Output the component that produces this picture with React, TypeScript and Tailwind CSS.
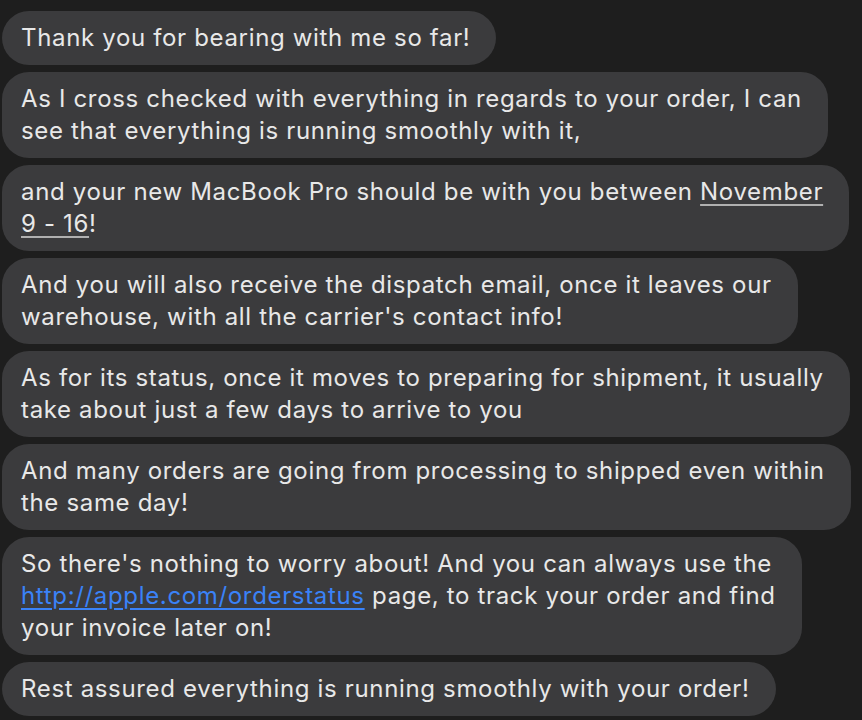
import React from "react";

const Bubble = ({ children }: { children: React.ReactNode }) => (
  <div className="w-fit rounded-[27px] bg-[#3b3b3d] pl-[19px] pr-[26px] py-[11px] text-[24px] leading-[32px] tracking-[0.66px] text-[#e8e8e8] whitespace-nowrap">
    {children}
  </div>
);

export default function App() {
  return (
    <div
      className="min-h-[720px] w-[862px] overflow-hidden bg-[#1e1e1e] pl-[2px] pt-[11px] flex flex-col items-start gap-[7px]"
      style={{ fontFamily: "Inter, 'Noto Sans', sans-serif" }}
    >
      <Bubble>Thank you for bearing with me so far!</Bubble>
      <Bubble>
        As I cross checked with everything in regards to your order, I can
        <br />
        see that everything is running smoothly with it,
      </Bubble>
      <Bubble>
        and your new MacBook Pro should be with you between{" "}
        <span className="underline underline-offset-[4px] decoration-[#b0b0b0]">November</span>
        <br />
        <span className="underline underline-offset-[4px] decoration-[#b0b0b0]">9 - 16</span>!
      </Bubble>
      <Bubble>
        And you will also receive the dispatch email, once it leaves our
        <br />
        warehouse, with all the carrier's contact info!
      </Bubble>
      <Bubble>
        As for its status, once it moves to preparing for shipment, it usually
        <br />
        take about just a few days to arrive to you
      </Bubble>
      <Bubble>
        And many orders are going from processing to shipped even within
        <br />
        the same day!
      </Bubble>
      <Bubble>
        So there's nothing to worry about! And you can always use the
        <br />
        <span className="text-[#3a82f7] underline underline-offset-[4px]">http://apple.com/orderstatus</span> page, to track your order and find
        <br />
        your invoice later on!
      </Bubble>
      <Bubble>Rest assured everything is running smoothly with your order!</Bubble>
    </div>
  );
}
